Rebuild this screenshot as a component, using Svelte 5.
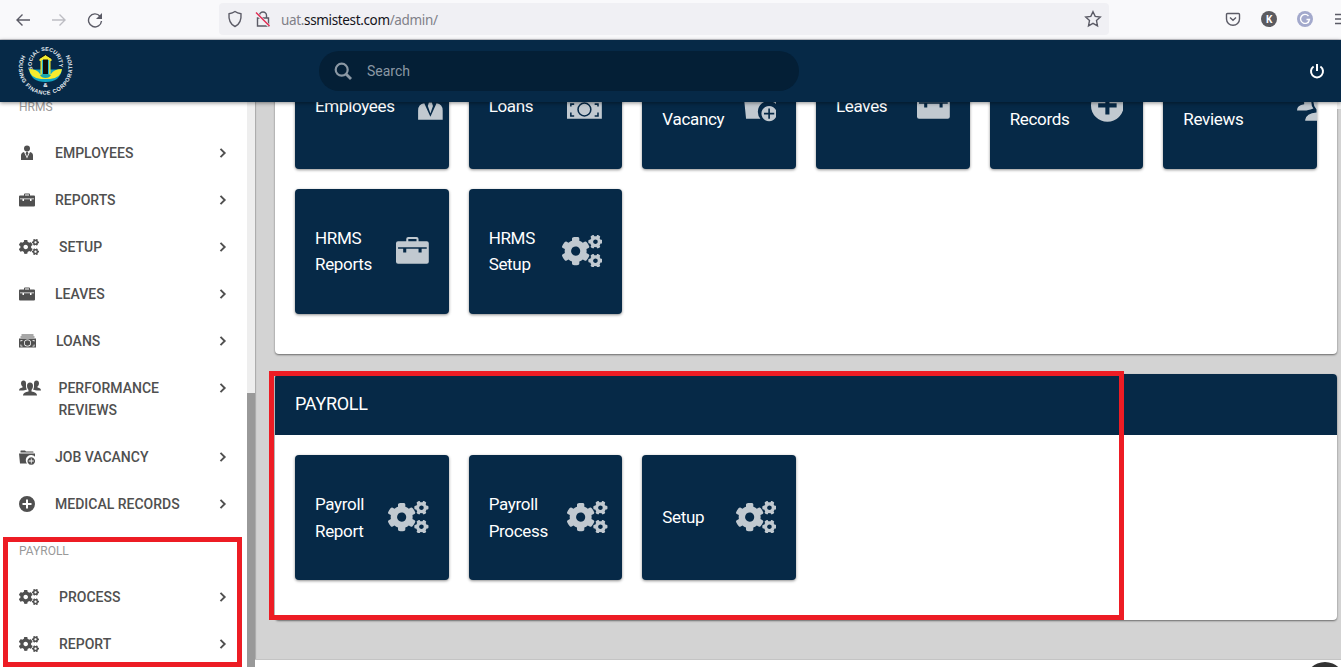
<script>
  const menu = [
    { label: 'EMPLOYEES', icon: 'tie' },
    { label: 'REPORTS', icon: 'case' },
    { label: 'SETUP', icon: 'cogs' },
    { label: 'LEAVES', icon: 'case' },
    { label: 'LOANS', icon: 'cash' },
    { label: 'PERFORMANCE REVIEWS', icon: 'group', tall: true },
    { label: 'JOB VACANCY', icon: 'folder' },
    { label: 'MEDICAL RECORDS', icon: 'plus' }
  ];
  const payrollMenu = [
    { label: 'PROCESS', icon: 'cogs' },
    { label: 'REPORT', icon: 'cogs' }
  ];
  const hrms = [
    { label: ['Employees'], icon: 'tie' },
    { label: ['Loans'], icon: 'cash' },
    { label: ['Job', 'Vacancy'], icon: 'folder' },
    { label: ['Leaves'], icon: 'case' },
    { label: ['Medical', 'Records'], icon: 'plus' },
    { label: ['Performance', 'Reviews'], icon: 'group' },
    { label: ['HRMS', 'Reports'], icon: 'case' },
    { label: ['HRMS', 'Setup'], icon: 'cogs' }
  ];
  const payroll = [
    { label: ['Payroll', 'Report'], icon: 'cogs' },
    { label: ['Payroll', 'Process'], icon: 'cogs' },
    { label: ['Setup'], icon: 'cogs' }
  ];
  const smallCog = 'M512.1 191l-8.2 14.3c-3 5.3-9.4 7.5-15.1 5.4-11.8-4.4-22.6-10.7-32.1-18.6-4.6-3.8-5.8-10.5-2.8-15.7l8.2-14.3c-6.9-8-12.3-17.3-15.9-27.4h-16.5c-6 0-11.2-4.3-12.2-10.3-2-12-2.1-24.6 0-37.1 1-6 6.2-10.4 12.2-10.4h16.5c3.6-10.1 9-19.4 15.9-27.4l-8.2-14.3c-3-5.2-1.9-11.9 2.8-15.7 9.5-7.9 20.4-14.2 32.1-18.6 5.7-2.1 12.1.1 15.1 5.4l8.2 14.3c10.5-1.9 21.2-1.9 31.7 0L552 6.3c3-5.3 9.4-7.5 15.1-5.4 11.8 4.4 22.6 10.7 32.1 18.6 4.6 3.8 5.8 10.5 2.8 15.7l-8.2 14.3c6.9 8 12.3 17.3 15.9 27.4h16.5c6 0 11.2 4.3 12.2 10.3 2 12 2.1 24.6 0 37.1-1 6-6.2 10.4-12.2 10.4h-16.5c-3.6 10.1-9 19.4-15.9 27.4l8.2 14.3c3 5.2 1.9 11.9-2.8 15.7-9.5 7.9-20.4 14.2-32.1 18.6-5.7 2.1-12.1-.1-15.1-5.4l-8.2-14.3c-10.4 1.9-21.2 1.9-31.7 0zm-10.5-58.8c38.5 29.6 82.4-14.3 52.8-52.8-38.5-29.7-82.4 14.3-52.8 52.8z';
  const bigCog = 'M386.3 286.1l33.7 16.8c10.1 5.8 14.5 18.1 10.5 29.1-8.9 24.2-26.4 46.4-42.6 65.8-7.4 8.9-20.2 11.1-30.3 5.3l-29.1-16.8c-16 13.7-34.6 24.6-54.9 31.7v33.6c0 11.6-8.3 21.6-19.7 23.6-24.6 4.2-50.4 4.4-75.9 0-11.5-2-20-11.9-20-23.6V418c-20.3-7.2-38.9-18-54.9-31.7L74 403c-10 5.8-22.9 3.6-30.3-5.3-16.2-19.4-33.3-41.6-42.2-65.7-4-10.9.4-23.2 10.5-29.1l33.3-16.8c-3.9-20.9-3.9-42.4 0-63.4L12 205.8c-10.1-5.8-14.6-18.1-10.5-29 8.9-24.2 26-46.4 42.2-65.8 7.4-8.9 20.2-11.1 30.3-5.3l29.1 16.8c16-13.7 34.6-24.6 54.9-31.7V57.1c0-11.5 8.2-21.5 19.6-23.5 24.6-4.2 50.5-4.4 76-.1 11.5 2 20 11.9 20 23.6v33.6c20.3 7.2 38.9 18 54.9 31.7l29.1-16.8c10-5.8 22.9-3.6 30.3 5.3 16.2 19.4 33.2 41.6 42.1 65.8 4 10.9.1 23.2-10 29.1l-33.7 16.8c3.9 21 3.9 42.5 0 63.5zm-117.6 21.1c59.2-77-28.7-164.9-105.7-105.7-59.2 77 28.7 164.9 105.7 105.7z';
</script>

{#snippet icon(name, h)}
  {#if name === 'cogs'}
    <svg width={h * 1.25} height={h} viewBox="0 0 640 512" fill="currentColor"><path d={smallCog} /><path d={smallCog} transform="translate(0 300)" /><path d={bigCog} /></svg>
  {:else if name === 'tie'}
    <svg width={h} height={h} viewBox="0 0 32 32" fill="currentColor"><circle cx="16" cy="7" r="6" /><path d="M10 14 16 27l6-13q6 1 6 7v9H4V21q0-6 6-7z" /><path d="M14.500 13.500h3l1 3L16 24l-2.500-7.500z" /></svg>
  {:else if name === 'case'}
    <svg width={h} height={h} viewBox="0 0 32 32" fill="currentColor"><path fill-rule="evenodd" d="M10 7V5q0-2 2-2h8q2 0 2 2v2h8q2 0 2 2v18q0 2-2 2H2q-2 0-2-2V9q0-2 2-2zm2 0h8V5h-8zM2 13v1.500h5V18h3v-3.500h12V18h3v-3.500h5V13z" /></svg>
  {:else if name === 'cash'}
    <svg width={h * 1.0625} height={h} viewBox="0 0 34 32" fill="currentColor"><path d="M5 3h24v2H5zM3 7h28v2H3z" /><path fill-rule="evenodd" d="M0 11h34v18H0zM3 14v3h1.500v-1.500H7V14zm24 0v1.500h2.500V17H31v-3zM3 23v4h4v-1.500H4.500V23zm26.500 0v2.500H27V27h4v-4zM17 13a7 7 0 1 0 0 14 7 7 0 1 0 0-14zm0 1.500a5.500 5.500 0 1 1 0 11 5.500 5.500 0 1 1 0-11z" /></svg>
  {:else if name === 'folder'}
    <svg width={h} height={h} viewBox="0 0 32 32" fill="currentColor"><path d="M3 6V4q0-1 1-1h8l2 2h14q1 0 1 1v1H3zM0 9h32v6.500A9.500 9.500 0 0 0 16 29H2z" /><path fill-rule="evenodd" d="M24.500 16.500a7.500 7.500 0 1 0 .001 0zM23.700 19v4.200h-4.200v1.600h4.200V29h1.600v-4.200h4.200v-1.600h-4.200V19z" /></svg>
  {:else if name === 'plus'}
    <svg width={h} height={h} viewBox="0 0 32 32" fill="currentColor"><path fill-rule="evenodd" d="M16 0a16 16 0 1 0 0 32 16 16 0 1 0 0-32zM14 7h4v7h7v4h-7v7h-4v-7H7v-4h7z" /></svg>
  {:else}
    <svg width={h * 1.375} height={h} viewBox="0 0 44 32" fill="currentColor"><path d="M22 5q6 0 6 7 0 5-3 8v3q10 1 11 7v1H8v-1q1-6 11-7v-3q-3-3-3-8 0-7 6-7z" /><path d="M9 1q5 0 5 6v6q0 4 2 6-6 2-8 2H0q0-5 7-6v-2q-3-2-3-6 0-6 5-6zM35 1q5 0 5 6 0 4-3 6v2q7 1 7 6h-8q-2 0-8-2 2-2 2-6V7q0-6 5-6z" /></svg>
  {/if}
{/snippet}

{#snippet row(item)}
  <li class:tall={item.tall}>
    <span class="ico">{@render icon(item.icon, 16)}</span>
    <span class="name">{item.label}</span>
    <svg class="chev" width="8" height="10" viewBox="0 0 8 10"><path d="M1.500.8 5.700 5 1.500 9.200" fill="none" stroke="currentColor" stroke-width="1.900" /></svg>
  </li>
{/snippet}

{#snippet tile(item)}
  <div class="tile">
    <div class="cap">{#each item.label as line}<div>{line}</div>{/each}</div>
    <span class="big" class:raised={item.icon !== 'cogs'}>{@render icon(item.icon, item.icon === 'cogs' ? 32.4 : 32.8)}</span>
  </div>
{/snippet}

<div class="page">
  <div class="browser">
    <div class="nav">
      <svg width="16" height="16" viewBox="0 0 16 16"><path d="M15 8H2M7.500 2.500 2 8l5.500 5.500" /></svg>
      <svg class="dim" width="16" height="16" viewBox="0 0 16 16"><path d="M1 8h13M8.500 2.500 14 8l-5.500 5.500" /></svg>
      <svg width="16" height="16" viewBox="0 0 16 16"><path d="M13 4.200A6.500 6.500 0 1 0 14.500 9" /><path class="solid" d="M15 1v6H9z" /></svg>
    </div>
    <div class="url">
      <svg width="16" height="18" viewBox="0 0 16 18"><path d="M8 1.500c2 1.500 4 2 6 2.300.5 6-1.500 10.700-6 12.700-4.500-2-6.500-6.700-6-12.700 2-.3 4-.8 6-2.300z" /></svg>
      <svg class="lock" width="16" height="18" viewBox="0 0 16 18"><path d="M4.500 8V5.500a3.500 3.500 0 0 1 7 0V8M2.500 8h11v8h-11z" /><path class="gap" d="M1 3l13 13" /><path class="slash" d="M1 2.500 14.500 16" /></svg>
      <span class="addr">uat.<b>ssmistest.com</b>/admin/</span>
      <svg class="star" width="18" height="18" viewBox="0 0 18 18"><path d="m9 1.700 2.200 4.700 5.100.6-3.800 3.600 1 5.200L9 13.300l-4.500 2.500 1-5.200L1.700 7l5.100-.6z" /></svg>
    </div>
    <div class="tools">
      <svg width="16" height="16" viewBox="0 0 16 16"><path d="M2.500 2.500h11q1 0 1 1V8a6.500 6.200 0 0 1-13 0V3.500q0-1 1-1zM5 6.500 8 9.300l3-2.800" /></svg>
      <span class="badge k">K</span>
      <span class="badge g"><svg class="glyph" width="12" height="12" viewBox="0 0 12 12"><path d="M9.500 3A4.500 4.500 0 1 0 10.500 6.500H7.500M10.500 6.500 9 10" /></svg></span>
      <svg class="burger" width="16" height="16" viewBox="0 0 16 16"><path d="M1 3.500h14M1 8h14M1 12.500h14" /></svg>
    </div>
  </div>

  <header>
    <svg class="logo" width="60" height="56" viewBox="16 42 60 56">
      <defs>
        <path id="ring-in" d="M32.900 68.500A13.600 13.600 0 1 1 58.100 68.500" />
        <path id="ring-out" d="M22 54A26.800 26.800 0 1 0 69 54" />
      </defs>
      <text class="ring inner"><textPath href="#ring-in" textLength="50">SOCIAL SECURITY</textPath></text>
      <text class="ring"><textPath href="#ring-out" textLength="111">HOUSING FINANCE CORPORATION</textPath></text>
      <path d="M29 68.500h33q-2 12.500-16.500 12.500T29 68.500z" fill="#12a5c4" />
      <path d="M29 68q8 0 11 5h11q3-5 11-5-1 9-12 10h-9q-11-1-12-10z" fill="#f6ec2e" />
      <path d="M40 74q5.500-2.500 11 0-1.500 3-5.500 3t-5.500-3z" fill="#19a9ae" />
      <path d="M39.500 58 45.500 54l6 4v2h-1v13h-10V60h-1z" fill="#f6ec2e" />
      <path d="M41.800 59h7.400v14h-7.400z" fill="#25b6cf" />
      <path d="M43 58.500h5V73h-5z" fill="#101010" />
      <path d="M39 57.500 45.500 53.500l6.500 4" fill="none" stroke="#151515" />
      <text x="45.500" y="86" class="amp">&amp;</text>
    </svg>
    <div class="search">
      <svg width="18" height="18" viewBox="0 0 18 18"><circle cx="7.700" cy="7.700" r="6" fill="none" stroke="currentColor" stroke-width="2.200" /><path d="m12 12 5 5" stroke="currentColor" stroke-width="2.800" /></svg>
      <span>Search</span>
    </div>
    <svg class="power" width="16" height="16" viewBox="0 0 16 16"><path d="M4.600 3.500A6 6 0 1 0 11.400 3.500M8 1v7" fill="none" stroke="#fff" stroke-width="2" /></svg>
  </header>

  <div class="body">
    <aside>
      <ul>
        <li class="head">HRMS</li>
        {#each menu as item}{@render row(item)}{/each}
        <li class="head">PAYROLL</li>
        {#each payrollMenu as item}{@render row(item)}{/each}
      </ul>
      <div class="track"><div class="thumb"></div></div>
    </aside>
    <main>
      <section class="card first">
        <div class="grid">{#each hrms as item}{@render tile(item)}{/each}</div>
      </section>
      <section class="card">
        <h2>PAYROLL</h2>
        <div class="grid">{#each payroll as item}{@render tile(item)}{/each}</div>
      </section>
      <footer></footer>
      <div class="edge"></div>
      <div class="fab"></div>
    </main>
  </div>
  <div class="mark side"></div>
  <div class="mark panel"></div>
</div>

<style>
  .page { position: relative; width: 1341px; height: 667px; overflow: hidden; display: flex; flex-direction: column; font-family: Roboto, sans-serif; background: #fff; }
  svg { display: block; flex: none; }
  .browser { box-sizing: border-box; height: 40px; flex: none; background: #f9f9fb; border-bottom: 1px solid #ccccd2; display: flex; align-items: center; overflow: hidden; }
  .browser svg { fill: none; stroke: #5b5b66; stroke-width: 1.4; }
  .browser .solid { fill: #5b5b66; stroke: none; }
  .browser .gap { stroke: #f0f0f4; stroke-width: 3; }
  .browser .slash { stroke: #e22850; }
  .browser .glyph { stroke: #fff; }
  .nav { flex: none; display: flex; gap: 20px; padding-left: 15px; width: 204px; }
  .browser .nav .dim { stroke: #bdbdc3; }
  .url { flex: none; width: 890px; height: 32px; margin-bottom: 2px; background: #f0f0f4; border-radius: 4px; display: flex; align-items: center; box-sizing: border-box; padding: 0 7px 0 8px; }
  .lock { margin-left: 12px; }
  .addr { flex: 1; margin-left: 10px; padding-top: 2px; font: 13.500px "Noto Sans", sans-serif; color: #808088; letter-spacing: -0.350px; white-space: nowrap; }
  .addr b { font-weight: 400; color: #15141a; }
  .tools { flex: none; display: flex; align-items: center; gap: 20px; margin-left: 116px; margin-bottom: 2px; }
  .badge { width: 16px; height: 16px; border-radius: 50%; display: flex; align-items: center; justify-content: center; color: #fff; font: bold 10px "Open Sans", sans-serif; }
  .k { background: #5b5b60; }
  .g { background: #a3a9cc; }
  .burger { margin-left: 1px; }

  header { height: 62px; flex: none; background: #062947; display: flex; align-items: center; position: relative; z-index: 2; box-shadow: 0 1px 4px rgba(0, 0, 0, .45); }
  .logo { margin-left: 16px; }
  .ring { font: bold 5.600px "Liberation Sans", sans-serif; fill: #e8eef3; }
  .inner { font-size: 5.400px; }
  .amp { font: bold 6px "Liberation Sans", sans-serif; fill: #fff; text-anchor: middle; }
  .search { margin-left: 243px; width: 480px; height: 40px; border-radius: 20px; background: #041f36; display: flex; align-items: center; color: #8b98a4; font-size: 14px; box-sizing: border-box; padding-left: 15px; gap: 15px; }
  .power { margin-left: 510px; }

  .body { flex: 1; min-height: 0; display: flex; overflow: hidden; }
  aside { width: 255px; flex: none; display: flex; background: #fff; overflow: hidden; }
  ul { list-style: none; margin: -18px 0 0; padding: 0; width: 247px; }
  li { height: 47px; box-sizing: border-box; padding: 12px 19px; display: flex; align-items: flex-start; color: #505050; font-size: 14px; font-weight: 500; line-height: 22px; }
  li.tall { height: 69px; }
  li.tall .ico { margin-right: 17.500px; }
  li.head { height: 46px; font-size: 12px; font-weight: 400; color: #999; padding-top: 12px; }
  .ico { padding-top: 3px; margin-right: 20px; }
  .name { flex: 1; max-width: 125px; }
  .chev { margin: 6px 1px 0 auto; }
  .track { width: 8px; background: #eee; display: flex; align-items: flex-end; }
  .thumb { width: 8px; height: 274px; background: #999; }

  main { position: relative; flex: 1; background: #d3d3d3; display: flex; flex-direction: column; padding: 0 4px 0 20px; box-shadow: inset 1px 0 1px rgba(0, 0, 0, .2); }
  .card { flex: none; background: #fff; border-radius: 4px; box-shadow: 0 1px 2px rgba(0, 0, 0, .5); margin-bottom: 20px; }
  .first { margin-top: -78px; }
  .card .grid { display: grid; grid-template-columns: repeat(6, 1fr); gap: 20px; padding: 20px 20px 40px; }
  h2 { margin: 0; height: 61px; box-sizing: border-box; padding: 0 20px; line-height: 60px; font-size: 18px; letter-spacing: -0.3px; font-weight: 400; color: #fff; background: #062947; border-radius: 4px 4px 0 0; }
  .tile { min-width: 0; height: 125px; box-sizing: border-box; padding: 0 20px; border-radius: 4px; background: #062947; box-shadow: 0 1px 3px rgba(0, 0, 0, .45); display: flex; align-items: center; justify-content: space-between; overflow: hidden; color: #fff; font-size: 17px; letter-spacing: -0.320px; line-height: 26.500px; }
  .first .tile { line-height: 26px; }
  .first .cap { padding-bottom: 2px; }
  .big { flex: none; margin: -1px 0 0 19.300px; color: #c1c9d0; }
  .raised { margin-top: -2px; }
  footer { flex: 1; margin: 19px -4px 0 -20px; border-top: 1px solid #c4c4c4; background: #fff; }
  .edge { position: absolute; right: 0; top: 0; width: 4px; height: 7px; background: #eee; }
  .fab { position: absolute; left: 1050px; top: 560px; width: 40px; height: 40px; border-radius: 50%; background: #333; }
  .mark { position: absolute; z-index: 3; box-sizing: border-box; border: 5px solid #ed1c24; }
  .side { left: 3px; top: 537px; width: 239px; height: 130px; }
  .panel { left: 269px; top: 371px; width: 855px; height: 249px; }
</style>
